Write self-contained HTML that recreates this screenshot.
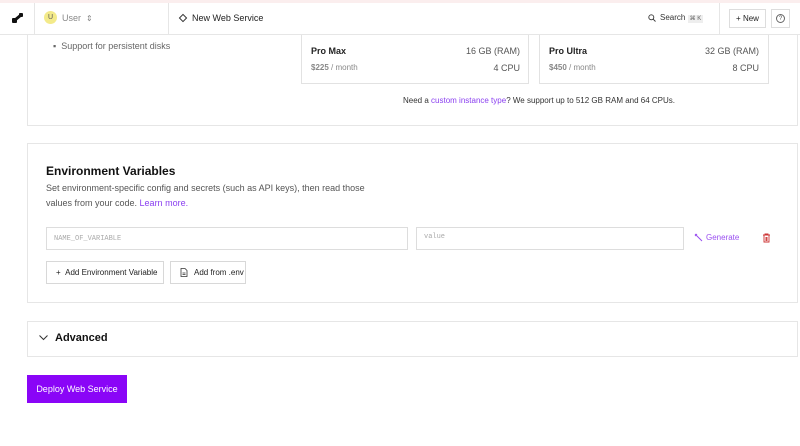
<!DOCTYPE html>
<html><head><style>
*{box-sizing:border-box;margin:0;padding:0}
body{width:800px;height:446px;overflow:hidden;background:#fff;font-family:"Liberation Sans",sans-serif;color:#222;position:relative}
.a{position:absolute;white-space:nowrap}
.card{position:absolute;border:1px solid #e6e6e6;background:#fff}
.pc{position:absolute;border:1px solid #e2e2e2;border-top:none;background:#fff}
.btn{position:absolute;border:1px solid #d8d8d8;background:#fff;font-size:8px;color:#222;display:flex;align-items:center;padding-left:9px;white-space:nowrap}
</style></head><body>
<div class="a" style="left:0;top:0;width:800px;height:3px;background:#fbeeee"></div>
<div class="card" style="left:27px;top:20px;width:771px;height:106px;border-top:none"></div>
<div class="a" style="left:53px;top:41px;font-size:9px;color:#666">▪&nbsp; Support for persistent disks</div>
<div class="pc" style="left:301px;top:30px;width:228px;height:54px"></div>
<div class="a" style="left:311px;top:46px;font-size:9px;font-weight:bold">Pro Max</div>
<div class="a" style="left:311px;top:63px;font-size:8px;color:#888"><b>$225</b> / month</div>
<div class="a" style="left:420px;top:46px;width:100px;text-align:right;font-size:9px;color:#555">16 GB (RAM)</div>
<div class="a" style="left:420px;top:63px;width:100px;text-align:right;font-size:9px;color:#555">4 CPU</div>
<div class="pc" style="left:539px;top:30px;width:230px;height:54px"></div>
<div class="a" style="left:549px;top:46px;font-size:9px;font-weight:bold">Pro Ultra</div>
<div class="a" style="left:549px;top:63px;font-size:8px;color:#888"><b>$450</b> / month</div>
<div class="a" style="left:659px;top:46px;width:100px;text-align:right;font-size:9px;color:#555">32 GB (RAM)</div>
<div class="a" style="left:659px;top:63px;width:100px;text-align:right;font-size:9px;color:#555">8 CPU</div>
<div class="a" style="left:403px;top:96px;font-size:8px;color:#333">Need a <span style="color:#8a3ff0">custom instance type</span>? We support up to 512 GB RAM and 64 CPUs.</div>
<div class="a" style="left:0;top:3px;width:800px;height:32px;background:#fff;border-bottom:1px solid #e6e6e6"></div>
<div class="a" style="left:34px;top:3px;width:1px;height:32px;background:#e6e6e6"></div>
<div class="a" style="left:168px;top:3px;width:1px;height:32px;background:#e6e6e6"></div>
<div class="a" style="left:719px;top:3px;width:1px;height:32px;background:#e6e6e6"></div>
<svg class="a" style="left:12px;top:13px" width="12" height="11" viewBox="0 0 12 11"><rect x="0" y="5" width="5" height="5" rx="1" fill="#111"/><rect x="7" y="0" width="4" height="4" rx="1" fill="#111"/><path d="M3 7 L9 2" stroke="#111" stroke-width="3"/></svg>
<div class="a" style="left:44px;top:11px;width:13px;height:13px;border-radius:50%;background:#f3ea8a;font-size:7px;text-align:center;line-height:13px;color:#555">U</div>
<div class="a" style="left:62px;top:13px;font-size:9px;color:#888">User &nbsp;<span style="font-size:8px">⇕</span></div>
<div class="a" style="left:180px;top:13px;font-size:9px;color:#222"><span style="display:inline-block;width:6px;height:6px;border:1px solid #333;transform:rotate(45deg);margin-right:6px"></span>New Web Service</div>
<svg class="a" style="left:648px;top:14px" width="8" height="8" viewBox="0 0 8 8"><circle cx="3.3" cy="3.3" r="2.5" fill="none" stroke="#333" stroke-width="0.9"/><path d="M5.2 5.2 L7.5 7.5" stroke="#333" stroke-width="0.9"/></svg>
<div class="a" style="left:660px;top:13px;font-size:8px;color:#333">Search <span style="background:#eee;font-size:6px;padding:1px 2px;color:#666">⌘ K</span></div>
<div class="a" style="left:729px;top:9px;width:37px;height:19px;border:1px solid #ddd;font-size:8px;text-align:center;line-height:17px">+ New</div>
<div class="a" style="left:771px;top:9px;width:19px;height:19px;border:1px solid #ddd"></div>
<div class="a" style="left:776px;top:14px;width:9px;height:9px;border:1px solid #666;border-radius:50%;font-size:6px;text-align:center;line-height:8px;color:#555">?</div>
<div class="card" style="left:27px;top:143px;width:771px;height:160px"></div>
<div class="a" style="left:46px;top:164px;font-size:12px;font-weight:bold;color:#111">Environment Variables</div>
<div class="a" style="left:46px;top:181px;font-size:9px;color:#555;line-height:15px;width:340px;white-space:normal">Set environment-specific config and secrets (such as API keys), then read those values from your code. <span style="color:#8a3ff0">Learn more.</span></div>
<div class="a" style="left:46px;top:227px;width:362px;height:23px;border:1px solid #ddd;font-family:'Liberation Mono',monospace;font-size:7px;color:#aaa;padding:7px 7px">NAME_OF_VARIABLE</div>
<div class="a" style="left:416px;top:227px;width:268px;height:23px;border:1px solid #ddd;font-family:'Liberation Mono',monospace;font-size:7px;color:#aaa;padding:5px 7px">value</div>
<svg class="a" style="left:694px;top:233px" width="9" height="9" viewBox="0 0 9 9"><path d="M1 1 L8 8 M1 3 L3 1" stroke="#9a4ff0" stroke-width="1"/></svg>
<div class="a" style="left:706px;top:233px;font-size:8px;color:#9a4ff0">Generate</div>
<svg class="a" style="left:762px;top:233px" width="9" height="10" viewBox="0 0 9 10"><path d="M1 2 H8 M3 2 V1 H6 V2 M2 2 V9 H7 V2 M4 4 V8 M5 4 V8" stroke="#c33" stroke-width="0.9" fill="none"/></svg>
<div class="btn" style="left:46px;top:261px;width:118px;height:23px">+ &nbsp;Add Environment Variable</div>
<div class="btn" style="left:170px;top:261px;width:76px;height:23px"><svg width="8" height="9" viewBox="0 0 8 9" style="margin-right:6px"><path d="M1 .5 H5 L7 2.5 V8.5 H1 Z M2.5 5 H5.5 M2.5 6.5 H5.5" stroke="#333" stroke-width="0.8" fill="none"/></svg>Add from .env</div>
<div class="card" style="left:27px;top:321px;width:771px;height:36px"></div>
<svg class="a" style="left:39px;top:335px" width="9" height="6" viewBox="0 0 9 6"><path d="M0.5 0.5 L4.5 4.5 L8.5 0.5" stroke="#333" stroke-width="1" fill="none"/></svg>
<div class="a" style="left:55px;top:332px;font-size:11px;font-weight:bold;color:#111">Advanced</div>
<div class="a" style="left:27px;top:375px;width:100px;height:28px;background:#8a05f7;color:#fff;font-size:9px;text-align:center;line-height:28px">Deploy Web Service</div>
</body></html>
